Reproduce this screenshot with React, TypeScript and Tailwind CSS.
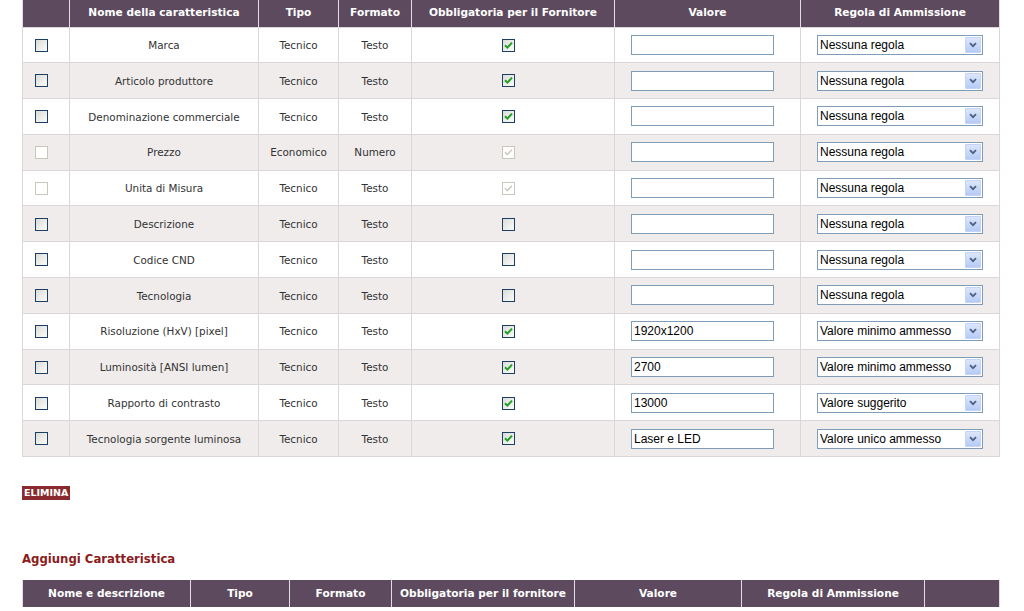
import React from "react";

type Row = {
  name: string;
  tipo: string;
  formato: string;
  obbl: boolean;
  disabled?: boolean;
  valore: string;
  regola: string;
};

const rows: Row[] = [
  { name: "Marca", tipo: "Tecnico", formato: "Testo", obbl: true, valore: "", regola: "Nessuna regola" },
  { name: "Articolo produttore", tipo: "Tecnico", formato: "Testo", obbl: true, valore: "", regola: "Nessuna regola" },
  { name: "Denominazione commerciale", tipo: "Tecnico", formato: "Testo", obbl: true, valore: "", regola: "Nessuna regola" },
  { name: "Prezzo", tipo: "Economico", formato: "Numero", obbl: true, disabled: true, valore: "", regola: "Nessuna regola" },
  { name: "Unita di Misura", tipo: "Tecnico", formato: "Testo", obbl: true, disabled: true, valore: "", regola: "Nessuna regola" },
  { name: "Descrizione", tipo: "Tecnico", formato: "Testo", obbl: false, valore: "", regola: "Nessuna regola" },
  { name: "Codice CND", tipo: "Tecnico", formato: "Testo", obbl: false, valore: "", regola: "Nessuna regola" },
  { name: "Tecnologia", tipo: "Tecnico", formato: "Testo", obbl: false, valore: "", regola: "Nessuna regola" },
  { name: "Risoluzione (HxV) [pixel]", tipo: "Tecnico", formato: "Testo", obbl: true, valore: "1920x1200", regola: "Valore minimo ammesso" },
  { name: "Luminosità [ANSI lumen]", tipo: "Tecnico", formato: "Testo", obbl: true, valore: "2700", regola: "Valore minimo ammesso" },
  { name: "Rapporto di contrasto", tipo: "Tecnico", formato: "Testo", obbl: true, valore: "13000", regola: "Valore suggerito" },
  { name: "Tecnologia sorgente luminosa", tipo: "Tecnico", formato: "Testo", obbl: true, valore: "Laser e LED", regola: "Valore unico ammesso" },
];

function CheckBox({ checked, disabled }: { checked?: boolean; disabled?: boolean }) {
  return (
    <div
      className={
        "inline-flex items-center justify-center w-[13px] h-[13px] border align-middle " +
        (disabled
          ? "border-[#c9c7ba] bg-white"
          : "border-[#1c3f66] bg-gradient-to-br from-[#dcdcd7] to-[#fbfbf9]")
      }
    >
      {checked && (
        <svg width="9" height="9" viewBox="0 0 9 9">
          <path
            d="M1 4.2 L3.4 6.6 L8 1.6"
            fill="none"
            stroke={disabled ? "#c4c2b4" : "#21a121"}
            strokeWidth={disabled ? 1.3 : 2}
          />
        </svg>
      )}
    </div>
  );
}

function FakeSelect({ value }: { value: string }) {
  return (
    <div className="inline-flex items-center w-[166px] h-[20px] border border-[#7f9db9] bg-white align-middle text-left">
      <span className="flex-1 pl-[2px] text-[12px] text-black leading-none" style={{ fontFamily: "'Liberation Sans', Arial, sans-serif" }}>
        {value}
      </span>
      <span className="w-[16px] h-[16px] mr-[1px] bg-gradient-to-b from-[#dce6fb] to-[#b6cbf5] border border-[#c3d3fd] flex items-center justify-center rounded-[1px]">
        <svg width="8" height="6" viewBox="0 0 8 6">
          <path d="M1 1.2 L4 4.2 L7 1.2" fill="none" stroke="#4d6185" strokeWidth="1.8" />
        </svg>
      </span>
    </div>
  );
}

function FakeInput({ value }: { value: string }) {
  return (
    <div
      className="inline-flex items-center w-[143px] h-[20px] border border-[#7f9db9] bg-white pl-[2px] text-[12px] text-black align-middle text-left"
      style={{ fontFamily: "'Liberation Sans', Arial, sans-serif" }}
    >
      {value}
    </div>
  );
}

const thCls = "h-[27px] bg-[#5d4a5e] text-white font-bold text-[10.6px] border-x border-[#e3dce3] text-center";

export default function App() {
  return (
    <div className="w-[1024px] h-[611px] overflow-hidden bg-white" style={{ fontFamily: "'DejaVu Sans', Verdana, sans-serif" }}>
      <div className="pl-[22px] w-[1000px]">
        <table className="border-collapse w-[977px] table-fixed text-[10.4px] text-[#333]">
          <colgroup>
            <col className="w-[47px]" />
            <col className="w-[189px]" />
            <col className="w-[80px]" />
            <col className="w-[73px]" />
            <col className="w-[203px]" />
            <col className="w-[186px]" />
            <col className="w-[199px]" />
          </colgroup>
          <thead>
            <tr>
              <th className={thCls}></th>
              <th className={thCls}>Nome della caratteristica</th>
              <th className={thCls}>Tipo</th>
              <th className={thCls}>Formato</th>
              <th className={thCls}>Obbligatoria per il Fornitore</th>
              <th className={thCls}>Valore</th>
              <th className={thCls}>Regola di Ammissione</th>
            </tr>
          </thead>
          <tbody>
            {rows.map((r, i) => (
              <tr key={i} className={"h-[35.8px] " + (i % 2 === 1 ? "bg-[#f0ecec]" : "bg-white")}>
                <td className="border border-[#dcd6d8] text-left pl-[12px]">
                  <CheckBox disabled={r.disabled} />
                </td>
                <td className="border border-[#dcd6d8] text-center pt-[2px]">{r.name}</td>
                <td className="border border-[#dcd6d8] text-center pt-[2px]">{r.tipo}</td>
                <td className="border border-[#dcd6d8] text-center pt-[2px]">{r.formato}</td>
                <td className="border border-[#dcd6d8] text-center pr-[9px]">
                  <CheckBox checked={r.obbl} disabled={r.disabled} />
                </td>
                <td className="border border-[#dcd6d8] text-center pr-[10px]">
                  <FakeInput value={r.valore} />
                </td>
                <td className="border border-[#dcd6d8] text-center">
                  <FakeSelect value={r.regola} />
                </td>
              </tr>
            ))}
          </tbody>
        </table>

        <div className="mt-[29px] h-[14px] flex items-start">
          <span className="bg-[#8a2a2e] text-white font-bold text-[9.5px] leading-[14px] px-[2px]">ELIMINA</span>
        </div>

        <div className="mt-[51px] text-[11.7px] font-bold text-[#8b1c1c] leading-[16px]">Aggiungi Caratteristica</div>

        <table className="mt-[13px] border-collapse w-[977px] table-fixed">
          <colgroup>
            <col className="w-[168px]" />
            <col className="w-[99px]" />
            <col className="w-[102px]" />
            <col className="w-[183px]" />
            <col className="w-[167px]" />
            <col className="w-[183px]" />
            <col className="w-[75px]" />
          </colgroup>
          <thead>
            <tr>
              <th className={thCls}>Nome e descrizione</th>
              <th className={thCls}>Tipo</th>
              <th className={thCls}>Formato</th>
              <th className={thCls}>Obbligatoria per il fornitore</th>
              <th className={thCls}>Valore</th>
              <th className={thCls}>Regola di Ammissione</th>
              <th className={thCls}></th>
            </tr>
          </thead>
        </table>
      </div>
    </div>
  );
}
